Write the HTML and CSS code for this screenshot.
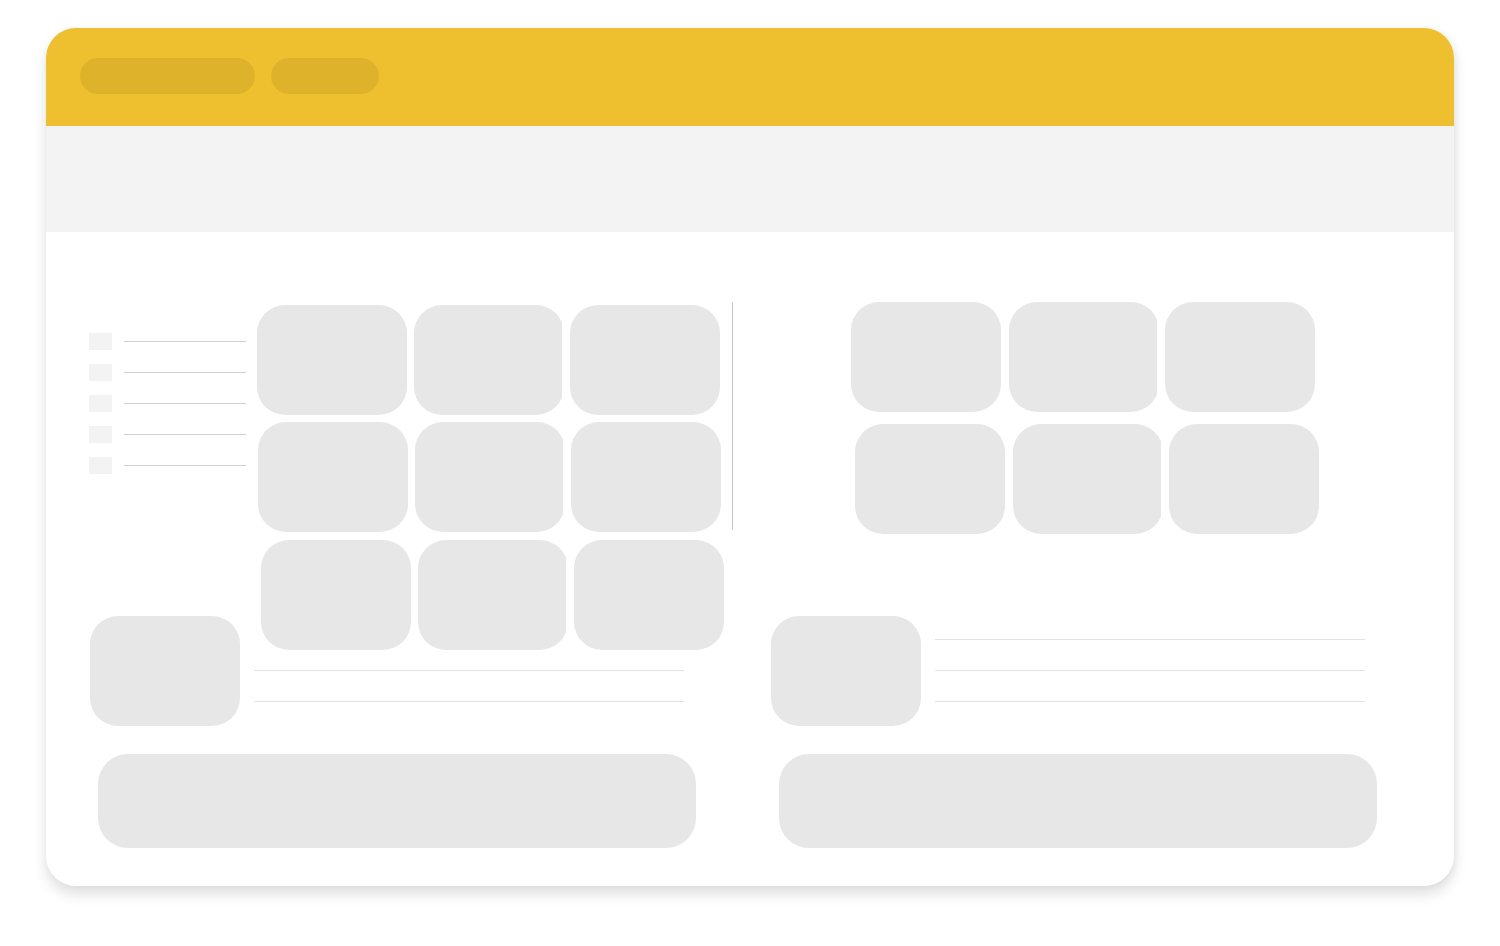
FILE: index.html
```html
<!DOCTYPE html>
<html lang="en">
<head>
    <meta charset="UTF-8" />
    <meta name="viewport" content="width=device-width, initial-scale=1.0" />
    <title>Loading</title>
    <link rel="stylesheet" href="styles.css">
</head>
<body>
    <div class="card">
        <header class="topbar">
            <span class="pill pill-wide"></span>
            <span class="pill pill-short"></span>
        </header>

        <div class="band"></div>

        <main class="main">
            <section class="top">
                <ul class="list">
                    <li><span class="box"></span><span class="rule"></span></li>
                    <li><span class="box"></span><span class="rule"></span></li>
                    <li><span class="box"></span><span class="rule"></span></li>
                    <li><span class="box"></span><span class="rule"></span></li>
                    <li><span class="box"></span><span class="rule"></span></li>
                </ul>

                <div class="tiles tiles-left">
                    <div class="row">
                        <div class="tile"></div>
                        <div class="tile clipped"></div>
                        <div class="tile"></div>
                    </div>
                    <div class="row shift-1">
                        <div class="tile"></div>
                        <div class="tile clipped"></div>
                        <div class="tile"></div>
                    </div>
                    <div class="row shift-4 drop-1">
                        <div class="tile"></div>
                        <div class="tile clipped"></div>
                        <div class="tile"></div>
                    </div>
                </div>

                <div class="divider"></div>

                <div class="tiles tiles-right">
                    <div class="row">
                        <div class="tile"></div>
                        <div class="tile clipped"></div>
                        <div class="tile"></div>
                    </div>
                    <div class="row shift-4">
                        <div class="tile"></div>
                        <div class="tile clipped"></div>
                        <div class="tile"></div>
                    </div>
                </div>
            </section>

            <section class="pair">
                <div class="media">
                    <div class="tile"></div>
                    <div class="lines">
                        <span class="line hidden"></span>
                        <span class="line"></span>
                        <span class="line"></span>
                    </div>
                </div>
                <div class="media">
                    <div class="tile"></div>
                    <div class="lines">
                        <span class="line"></span>
                        <span class="line"></span>
                        <span class="line"></span>
                    </div>
                </div>
            </section>

            <section class="pair bars">
                <div class="bar"></div>
                <div class="bar"></div>
            </section>
        </main>
    </div>
</body>
</html>
```

FILE: styles.css
```css
/* General Reset */
* {
    box-sizing: border-box;
    margin: 0;
    padding: 0;
}
body {
    font-family: 'Roboto', sans-serif;
    background: #fff;
    padding: 28px 0 60px 46px;
}
.card {
    width: 1408px;
    height: 858px;
    background: #fff;
    border-radius: 30px;
    overflow: hidden;
    box-shadow: 0 8px 14px rgba(0, 0, 0, 0.13), 2px 0 6px rgba(0, 0, 0, 0.04);
}
.topbar {
    height: 98px;
    background: #eec02f;
    display: flex;
    gap: 16px;
    padding: 30px 0 0 34px;
}
.pill {
    height: 36px;
    border-radius: 18px;
    background: #dfb22c;
}
.pill-wide {
    width: 175px;
}
.pill-short {
    width: 108px;
}
.band {
    height: 106px;
    background: #f3f3f3;
}
.main {
    padding: 70px 0 0 44px;
}
.top {
    display: flex;
    height: 232px;
}
.list {
    list-style: none;
    width: 157px;
    margin-left: -1px;
    padding-top: 31px;
    display: flex;
    flex-direction: column;
    gap: 14px;
}
.list li {
    display: flex;
    align-items: center;
    gap: 12px;
    height: 17px;
}
.box {
    width: 23px;
    height: 17px;
    background: #f3f3f3;
}
.rule {
    flex: 1;
    height: 1px;
    background: #cfcfcf;
}
.tiles {
    display: flex;
    flex-direction: column;
}
.tiles-left {
    margin: 3px 0 0 11px;
    gap: 7px;
    width: 463px;
}
.tiles-right {
    margin-left: 118px;
    gap: 12px;
}
.row {
    display: flex;
    gap: 7px;
}
.tiles-right .row {
    gap: 8px;
}
.shift-1 {
    margin-left: 1px;
}
.shift-4 {
    margin-left: 4px;
}
.drop-1 {
    margin-top: 1px;
}
.tile {
    flex: none;
    width: 150px;
    height: 110px;
    border-radius: 28px;
    background: #e7e7e7;
}
.clipped {
    clip-path: inset(0 2px 0 0);
    margin-right: -1px;
}
.tiles-right .clipped {
    margin-right: -2px;
}
.divider {
    width: 1px;
    height: 228px;
    margin-left: 12px;
    background: #c4c4c4;
}
.pair {
    display: grid;
    grid-template-columns: 681px 681px;
    margin-top: 82px;
}
.media {
    display: flex;
    gap: 14px;
}
.lines {
    width: 430px;
    padding-top: 23px;
    display: flex;
    flex-direction: column;
    gap: 30px;
}
.line {
    height: 1px;
    background: #e2e2e2;
}
.line.hidden {
    visibility: hidden;
}
.bars {
    margin-top: 28px;
}
.bar {
    width: 598px;
    height: 94px;
    margin-left: 8px;
    border-radius: 30px;
    background: #e7e7e7;
}
```
